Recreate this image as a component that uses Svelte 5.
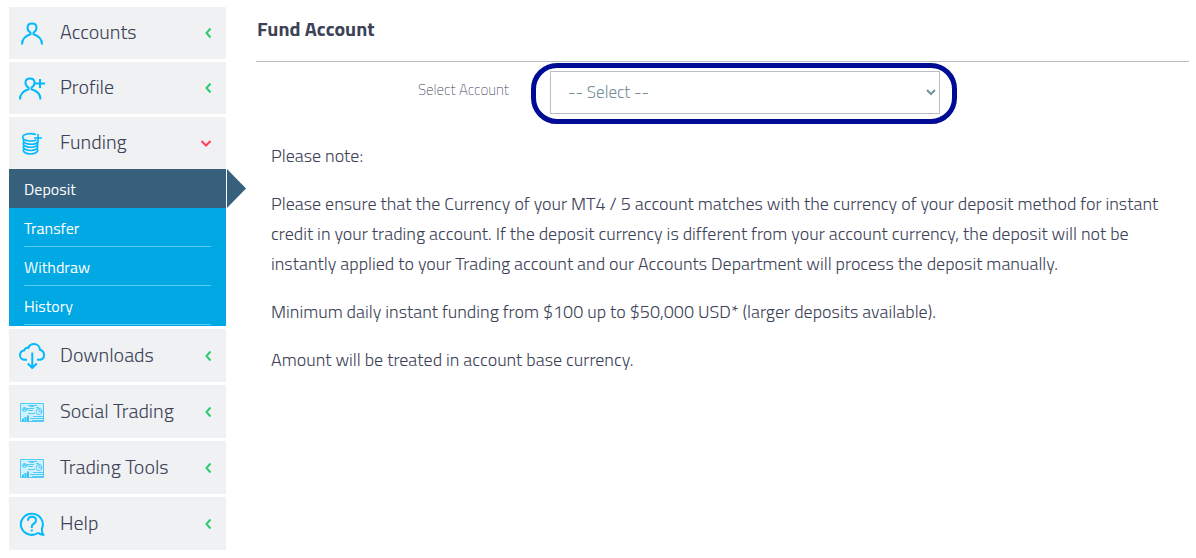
<script>
	let account = $state('');
	let open = $state('Funding');
	let current = $state('Deposit');

	const menu = [
		{ label: 'Accounts', icon: 'user' },
		{ label: 'Profile', icon: 'profile' },
		{ label: 'Funding', icon: 'coins', items: ['Deposit', 'Transfer', 'Withdraw', 'History'] },
		{ label: 'Downloads', icon: 'cloud', tall: true },
		{ label: 'Social Trading', icon: 'board', tall: true },
		{ label: 'Trading Tools', icon: 'board', tall: true },
		{ label: 'Help', icon: 'help', tall: true }
	];

	const toggle = (label) => {
		open = open === label ? '' : label;
	};
</script>

{#snippet icon(name)}
	<svg class="icon" viewBox="0 0 26 26" aria-hidden="true">
		{#if name === 'user'}
			<path d="M3 24.500c0-5 2.500-8.500 8.500-10.300v-1.500C9.500 11.500 8.500 9.500 8.500 7.800c0-2.700 1.800-4.300 4.500-4.300s4.500 1.600 4.500 4.300c0 1.700-1 3.700-3 4.900v1.500c6 1.800 8.500 5.300 8.500 10.300" />
		{:else if name === 'profile'}
			<path d="M1 24.500c0-5 2.500-8.500 8.500-10.300v-1.500C7.500 11.500 6.500 9.500 6.500 7.800c0-2.700 1.800-4.300 4.500-4.300s4.500 1.600 4.500 4.300c0 1.700-1 3.700-3 4.900v1.500c6 1.800 9 5.300 9 10.300M16 8.500h10M21 4v9" />
		{:else if name === 'coins'}
			<g class="coins">
				<path d="M17 4.500C10 2.600 3.800 4.200 3.800 7.200c0 3.600 9 4.800 13.700 2.800M15 8h8M19 4v9" />
				<path d="M4.500 9.300c-2.200 5.700 12 6.200 14 2.700M4.500 12.500c-2.200 6.200 16.200 6.200 14 .5M4.500 15.800c-2.200 6.200 16.200 6.200 14 0M4.500 19c-2.200 6.700 16.200 6.700 14 0" />
			</g>
		{:else if name === 'cloud'}
			<path d="M8 16.800H6c-3 0-5-2-5-4.600 0-2.800 1.800-4.600 4.200-4.800.5-2 2-2.900 4-2.400C10.300 2.300 12.300 1 14.800 1c3.600 0 6 2.500 6.200 5.800 2.500.8 4 2.700 4 5.200 0 2.900-2 4.800-4.800 4.800H18M13.300 9.500V25M8.800 20.500l4.500 4.500 4.500-4.500" />
		{:else if name === 'board'}
			<g class="board">
				<path class="frame" d="M1.500 4.500h23v18h-23z" />
				<path d="M9 6.500h9M11 7.500h4M8 9.500h7M9 11.500h5M17 8.500h3M14 17.500h10M11 19.500h13M13 21.500h11M9 14.500h7" />
				<circle cx="5.500" cy="10.500" r="2" />
				<path d="M3 10.500h6M5.500 10.500v-2" />
				<circle cx="20" cy="12.500" r="3" />
				<path d="M20 9.500v3h3" />
				<path class="bars" d="M3 19.500h2V22H3zM5.500 18h2v4h-2zM8 16.500h2V22H8z" />
			</g>
		{:else}
			<path d="M19.300 21.800A11 10.500 0 1 1 23 17.300c-.6 2.500.2 4.700 1.300 6.400-2 .2-3.500-.4-5-1.900M9 9.800C9 7.200 10.700 5.800 13 5.800s4 1.500 4 3.600c0 3-4.200 3.400-4.200 6.100v1.500M12.800 18.500v2" />
		{/if}
	</svg>
{/snippet}

<div class="page">
	<nav class="sidebar" aria-label="Main">
		{#each menu as entry}
			<button
				type="button"
				class="menu-row"
				class:tall={entry.tall}
				aria-expanded={open === entry.label}
				onclick={() => toggle(entry.label)}
			>
				{@render icon(entry.icon)}
				<span class="menu-label">{entry.label}</span>
				<svg class="chevron" viewBox="0 0 14 12" aria-hidden="true">
					{#if open === entry.label}
						<path class="down" d="M1.500 4L6 8.500 10.500 4" />
					{:else}
						<path d="M10.500 1.500L6.500 6l4 4.500" />
					{/if}
				</svg>
			</button>
			{#if entry.items && open === entry.label}
				<ul class="submenu">
					{#each entry.items as item}
						<li class:current={current === item}>
							<a href="#{item.toLowerCase()}" onclick={() => (current = item)}>{item}</a>
						</li>
					{/each}
				</ul>
			{/if}
		{/each}
	</nav>

	<main>
		<h1>Fund Account</h1>
		<div class="field">
			<label for="account">Select Account</label>
			<div class="highlight">
				<select id="account" bind:value={account}>
					<option value="">-- Select --</option>
				</select>
			</div>
		</div>
		<div class="notes">
			<p>Please note:</p>
			<p>
				Please ensure that the Currency of your MT4 / 5 account matches with the currency of your deposit method for instant
				credit in your trading account. If the deposit currency is different from your account currency, the deposit will not be
				instantly applied to your Trading account and our Accounts Department will process the deposit manually.
			</p>
			<p>Minimum daily instant funding from $100 up to $50,000 USD* (larger deposits available).</p>
			<p>Amount will be treated in account base currency.</p>
		</div>
	</main>
</div>

<style>
	:global(body) {
		margin: 0;
		background: #fff;
	}

	.page {
		display: grid;
		grid-template-columns: 217px 1fr;
		gap: 30px;
		padding: 7px 7px 7px 9px;
		font-family: 'Titillium Web', Roboto, sans-serif;
		font-weight: 300;
		color: #3c4257;
	}

	.menu-row {
		display: flex;
		align-items: center;
		width: 100%;
		height: 52px;
		margin: 0 0 3px;
		padding: 0 12px 0 10px;
		border: 0;
		background: #f0f1f3;
		color: inherit;
		font: inherit;
		font-size: 20px;
		text-align: left;
		cursor: pointer;
	}

	.menu-row.tall {
		height: 53px;
	}

	.menu-row[aria-expanded='true'] {
		margin-bottom: 0;
	}

	.icon {
		flex: none;
		width: 26px;
		height: 26px;
		margin-right: 15px;
		fill: none;
		stroke: #00b9ff;
		stroke-width: 2;
	}

	.coins {
		stroke-width: 1.6;
	}

	.board {
		stroke: #4fcbf8;
		stroke-width: 1;
	}

	.board .frame {
		fill: #d3f1fc;
	}

	.board .bars {
		fill: #35c2f5;
		stroke: none;
	}

	.menu-label {
		flex: 1;
		padding-bottom: 3px;
	}

	.chevron {
		width: 14px;
		height: 12px;
		fill: none;
		stroke: #2ecc71;
		stroke-width: 2;
	}

	.chevron .down {
		stroke: #ff3b58;
	}

	.submenu {
		margin: 0 0 3px;
		padding: 0 0 1px;
		list-style: none;
		background: #00a8e4;
	}

	.submenu li {
		position: relative;
		padding: 0 15px;
	}

	.submenu a {
		display: block;
		box-sizing: border-box;
		height: 39px;
		border-bottom: 1px solid #55ccf7;
		color: #fff;
		font-size: 16px;
		font-weight: 400;
		line-height: 40px;
		text-decoration: none;
	}

	.submenu .current {
		background: #37607d;
	}

	.submenu .current a {
		border-color: transparent;
	}

	.current::after {
		content: '';
		position: absolute;
		top: 0;
		left: calc(100% + 1px);
		width: 19px;
		height: 39px;
		background: #37607d;
		clip-path: polygon(0 0, 100% 50%, 0 100%);
	}

	h1 {
		margin: 0;
		padding: 8px 1px 18px;
		border-bottom: 1px solid #bdbdc7;
		font-size: 20px;
		font-weight: 700;
		line-height: 28px;
	}

	.field {
		display: grid;
		grid-template-columns: 253px 426px;
		gap: 22px;
	}

	.field label {
		padding-top: 18px;
		font-size: 15px;
		font-weight: 200;
		line-height: 20px;
		text-align: right;
	}

	.highlight {
		box-sizing: border-box;
		margin-top: 1px;
		padding: 3px 12px 5px 14px;
		border: 5px solid #000c96;
		border-radius: 26px;
	}

	select {
		display: block;
		width: 100%;
		height: 43px;
		padding: 0 0 2px 13px;
		border: 1px solid #bdbdc7;
		border-radius: 0;
		background: #fff;
		color: #76919a;
		font: inherit;
		font-size: 17px;
	}

	.notes {
		padding: 17px 15px 0;
		font-size: 18px;
		line-height: 30px;
	}

	.notes p {
		margin: 0 0 18px;
	}
</style>
